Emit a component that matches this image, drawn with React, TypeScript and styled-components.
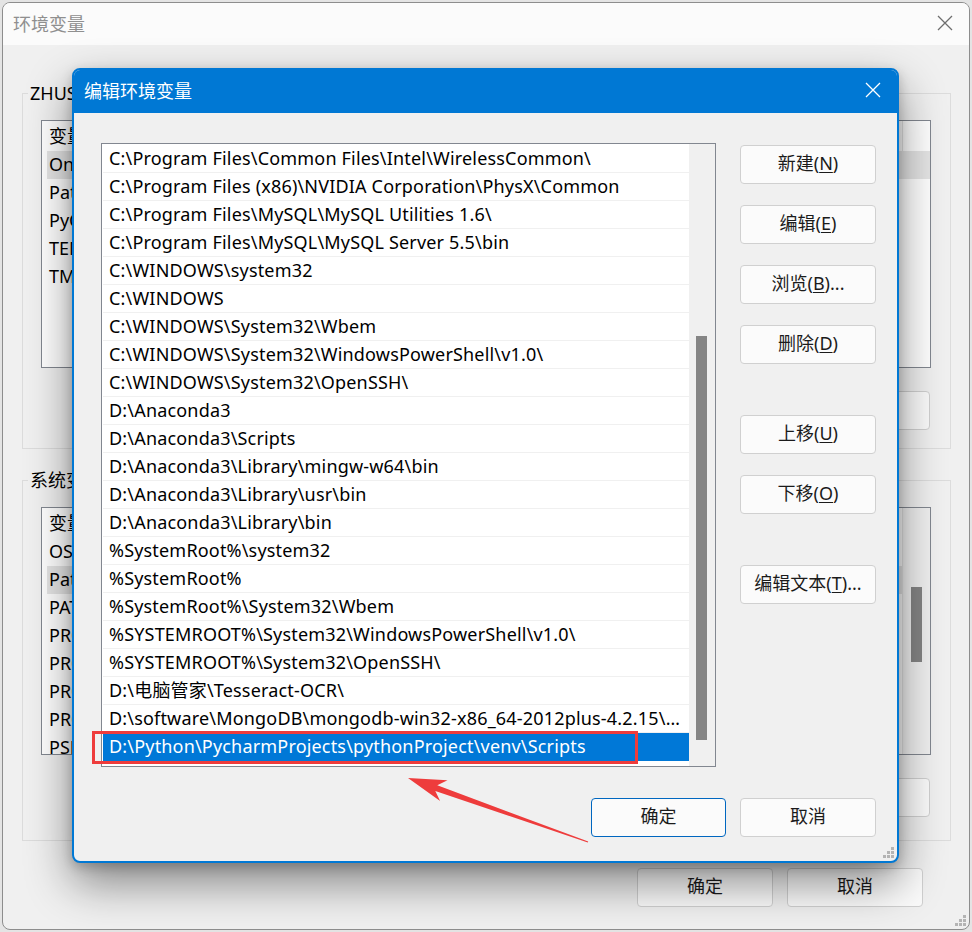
import React from "react";
import styled, { createGlobalStyle } from "styled-components";

const GlobalStyle = createGlobalStyle`
  html, body { margin: 0; padding: 0; }
  body {
    background: #e4e4e4;
    font-family: "Noto Sans", "Noto Sans CJK SC", sans-serif;
  }
`;

// 편집 대화상자 목록 (backslash는 이스케이프)
const paths = [
  "C:\\Program Files\\Common Files\\Intel\\WirelessCommon\\",
  "C:\\Program Files (x86)\\NVIDIA Corporation\\PhysX\\Common",
  "C:\\Program Files\\MySQL\\MySQL Utilities 1.6\\",
  "C:\\Program Files\\MySQL\\MySQL Server 5.5\\bin",
  "C:\\WINDOWS\\system32",
  "C:\\WINDOWS",
  "C:\\WINDOWS\\System32\\Wbem",
  "C:\\WINDOWS\\System32\\WindowsPowerShell\\v1.0\\",
  "C:\\WINDOWS\\System32\\OpenSSH\\",
  "D:\\Anaconda3",
  "D:\\Anaconda3\\Scripts",
  "D:\\Anaconda3\\Library\\mingw-w64\\bin",
  "D:\\Anaconda3\\Library\\usr\\bin",
  "D:\\Anaconda3\\Library\\bin",
  "%SystemRoot%\\system32",
  "%SystemRoot%",
  "%SystemRoot%\\System32\\Wbem",
  "%SYSTEMROOT%\\System32\\WindowsPowerShell\\v1.0\\",
  "%SYSTEMROOT%\\System32\\OpenSSH\\",
  "D:\\电脑管家\\Tesseract-OCR\\",
  "D:\\software\\MongoDB\\mongodb-win32-x86_64-2012plus-4.2.15\\bin",
  "D:\\Python\\PycharmProjects\\pythonProject\\venv\\Scripts",
];
const selectedIndex = 21;

// 뒤쪽 창은 대화상자에 가려 이름 앞부분만 보임
const userVars = [
  { name: "OneDrive", active: true },
  { name: "Path" },
  { name: "PyCharm" },
  { name: "TEMP" },
  { name: "TMP" },
];

const systemVars = [
  { name: "OS" },
  { name: "Path", active: true },
  { name: "PATHEXT" },
  { name: "PROCESSOR_ARCHITECTURE" },
  { name: "PROCESSOR_IDENTIFIER" },
  { name: "PROCESSOR_LEVEL" },
  { name: "PROCESSOR_REVISION" },
  { name: "PSModulePath" },
];

function CloseIcon({ color }: { color: string }) {
  return (
    <svg width="16" height="16" viewBox="0 0 16 16">
      <path d="M1 1 L15 15 M15 1 L1 15" stroke={color} strokeWidth="1.3" fill="none" />
    </svg>
  );
}

function Grip() {
  return (
    <svg width="11" height="11" viewBox="0 0 11 11">
      {[
        [8, 0],
        [4, 4],
        [8, 4],
        [0, 8],
        [4, 8],
        [8, 8],
      ].map(([x, y], i) => (
        <rect key={i} x={x} y={y} width="3" height="3" fill="#b4b4b4" />
      ))}
    </svg>
  );
}

function Key({ label, k, tail = "" }: { label: string; k?: string; tail?: string }) {
  return (
    <>
      {label}
      {k && (
        <>
          (<u>{k}</u>)
        </>
      )}
      {tail}
    </>
  );
}

function VarTable({ rows, scroll }: { rows: { name: string; active?: boolean }[]; scroll?: boolean }) {
  return (
    <VarList>
      <VarColumn>
        <HeaderRow>
          <Cell $w={250}>变量</Cell>
          <Cell $w={606} $divider />
        </HeaderRow>
        {rows.map((r) => (
          <VarRow key={r.name} $active={!!r.active}>
            <Cell $w={250}>{r.name}</Cell>
          </VarRow>
        ))}
      </VarColumn>
      {scroll && (
        <BackScroll>
          <BackThumb />
        </BackScroll>
      )}
    </VarList>
  );
}

export default function App() {
  return (
    <>
      <GlobalStyle />
      <Desktop>
        <BackWindow>
          <BackTitleBar>
            <span>环境变量</span>
            <CloseIcon color="#6e6e6e" />
          </BackTitleBar>
          <BackBody>
            <Group $pb={18}>
              <GroupTitle>ZHUSHUO 的用户变量(U)</GroupTitle>
              <VarTable rows={userVars} />
              <ButtonRow>
                <Button $w={136}>
                  <Key label="新建" k="N" tail="..." />
                </Button>
                <Button $w={136}>
                  <Key label="编辑" k="E" tail="..." />
                </Button>
                <Button $w={136}>
                  <Key label="删除" k="D" />
                </Button>
              </ButtonRow>
            </Group>
            <Group $pb={23} $mt={31}>
              <GroupTitle>系统变量(S)</GroupTitle>
              <VarTable rows={systemVars} scroll />
              <ButtonRow>
                <Button $w={136}>
                  <Key label="新建" k="W" tail="..." />
                </Button>
                <Button $w={136}>
                  <Key label="编辑" k="I" tail="..." />
                </Button>
                <Button $w={136}>
                  <Key label="删除" k="L" />
                </Button>
              </ButtonRow>
            </Group>
            <Footer $mt={27} $mr={28}>
              <Button $w={136}>确定</Button>
              <Button $w={136}>取消</Button>
            </Footer>
          </BackBody>
          <GripCorner>
            <Grip />
          </GripCorner>
        </BackWindow>

        <Dialog>
          <DialogTitle>
            <span>编辑环境变量</span>
            <CloseIcon color="#ffffff" />
          </DialogTitle>
          <DialogBody>
            <PathList>
              <Rows>
                {paths.map((p, i) => (
                  <PathRow key={p} $selected={i === selectedIndex}>
                    {p}
                  </PathRow>
                ))}
              </Rows>
              <ScrollTrack>
                <Thumb $top={192} $height={404} />
              </ScrollTrack>
            </PathList>
            <SideButtons>
              <Button $w={136}>
                <Key label="新建" k="N" />
              </Button>
              <Button $w={136}>
                <Key label="编辑" k="E" />
              </Button>
              <Button $w={136}>
                <Key label="浏览" k="B" tail="..." />
              </Button>
              <Button $w={136}>
                <Key label="删除" k="D" />
              </Button>
              <Button $w={136} $spaced>
                <Key label="上移" k="U" />
              </Button>
              <Button $w={136}>
                <Key label="下移" k="O" />
              </Button>
              <Button $w={136} $spaced>
                <Key label="编辑文本" k="T" tail="..." />
              </Button>
            </SideButtons>
          </DialogBody>
          <Footer $mt={31} $mr={21}>
            <Button $w={135} $primary>
              确定
            </Button>
            <Button $w={136}>取消</Button>
          </Footer>
          <GripCorner>
            <Grip />
          </GripCorner>
        </Dialog>

        <Highlight />
        <Arrow viewBox="0 0 195 80" width="195" height="80">
          <polygon
            points="8,8 47.5,10.3 37.3,15.3 188.2,71.5 187.8,72.5 35.3,20.9 40.1,31.1"
            fill="#ee3c3c"
          />
        </Arrow>
      </Desktop>
    </>
  );
}

const Desktop = styled.div`
  position: relative;
  width: 972px;
  height: 932px;
  overflow: hidden;
  background: #e4e4e4;
  font-size: 18px;
  color: #000;
`;

/* ---------- 뒤쪽 창 ---------- */

const BackWindow = styled.div`
  position: absolute;
  left: 2px;
  top: 2px;
  width: 968px;
  height: 928px;
  box-sizing: border-box;
  border: 1px solid #8d8d8d;
  border-radius: 8px;
  background: #f0f0f0;
  overflow: hidden;
  display: flex;
  flex-direction: column;
`;

const BackTitleBar = styled.div`
  height: 42px;
  flex-shrink: 0;
  box-sizing: border-box;
  display: flex;
  align-items: center;
  justify-content: space-between;
  padding: 0 16px 3px 10px;
  background: #fbfbfb;
  color: #8f8f8f;
`;

const BackBody = styled.div`
  display: flex;
  flex-direction: column;
  padding: 48px 18px 0 19px;
`;

const Group = styled.div<{ $pb: number; $mt?: number }>`
  border: 1px solid #dcdcdc;
  padding: 0 19px ${({ $pb }) => $pb}px 18px;
  margin-top: ${({ $mt }) => $mt || 0}px;
`;

const GroupTitle = styled.div`
  width: fit-content;
  height: 24px;
  line-height: 22px;
  margin: -12px 0 0 -13px;
  padding: 0 2px;
  background: #f0f0f0;
  white-space: nowrap;
`;

const VarList = styled.div`
  margin-top: 14px;
  height: 248px;
  box-sizing: border-box;
  border: 1px solid #828790;
  background: #ffffff;
  display: flex;
  overflow: hidden;
`;

const VarColumn = styled.div`
  flex: 1;
  padding-left: 5px;
  overflow: hidden;
`;

const HeaderRow = styled.div`
  display: flex;
  height: 30px;
  line-height: 30px;
`;

const VarRow = styled.div<{ $active: boolean }>`
  display: flex;
  height: 28px;
  line-height: 27px;
  background: ${({ $active }) => ($active ? "#e5e5e5" : "transparent")};
`;

const Cell = styled.div<{ $w: number; $divider?: boolean }>`
  width: ${({ $w }) => $w}px;
  flex-shrink: 0;
  box-sizing: border-box;
  padding-left: 2px;
  white-space: nowrap;
  overflow: hidden;
  border-right: ${({ $divider }) => ($divider ? "1px solid #e5e5e5" : "none")};
`;

const BackScroll = styled.div`
  width: 27px;
  flex-shrink: 0;
  background: #f0f0f0;
  border-left: 1px solid #e3e3e3;
`;

const BackThumb = styled.div`
  margin: 79px 0 0 8px;
  width: 11px;
  height: 75px;
  background: #858585;
`;

const ButtonRow = styled.div`
  display: flex;
  justify-content: flex-end;
  gap: 14px;
  margin: 23px 1px 0 0;
`;

const Footer = styled.div<{ $mt: number; $mr: number }>`
  display: flex;
  justify-content: flex-end;
  gap: 14px;
  margin-top: ${({ $mt }) => $mt}px;
  margin-right: ${({ $mr }) => $mr}px;
`;

const Button = styled.button<{ $w: number; $primary?: boolean; $spaced?: boolean }>`
  width: ${({ $w }) => $w}px;
  height: 39px;
  flex-shrink: 0;
  box-sizing: border-box;
  padding: 0 0 3px;
  margin-top: ${({ $spaced }) => ($spaced ? 30 : 0)}px;
  border: 1px solid ${({ $primary }) => ($primary ? "#0067c0" : "#d0d0d0")};
  border-radius: 4px;
  background: #fbfbfb;
  color: #1b1b1b;
  font-family: inherit;
  font-size: 18px;
  line-height: 1;
  white-space: nowrap;

  u {
    text-underline-offset: 2px;
  }
`;

const GripCorner = styled.div`
  position: absolute;
  right: 3px;
  bottom: 3px;
  line-height: 0;
`;

/* ---------- 편집 대화상자 ---------- */

const Dialog = styled.div`
  position: absolute;
  left: 72px;
  top: 68px;
  width: 827px;
  height: 795px;
  box-sizing: border-box;
  border: 2px solid #0078d4;
  border-radius: 8px;
  background: #f0f0f0;
  overflow: hidden;
  box-shadow: 0 20px 46px rgba(0, 0, 0, 0.45), 0 4px 12px rgba(0, 0, 0, 0.2);
`;

const DialogTitle = styled.div`
  height: 43px;
  box-sizing: border-box;
  display: flex;
  align-items: center;
  justify-content: space-between;
  padding: 0 16px 3px 10px;
  background: #0078d4;
  color: #ffffff;
`;

const DialogBody = styled.div`
  display: grid;
  grid-template-columns: 615px 136px;
  column-gap: 24px;
  padding: 30px 0 0 27px;
`;

const PathList = styled.div`
  height: 624px;
  box-sizing: border-box;
  border: 1px solid #828790;
  background: #ffffff;
  display: flex;
  overflow: hidden;
`;

const Rows = styled.div`
  width: 587px;
  padding: 1px 0 0 1px;
  box-sizing: border-box;
`;

const PathRow = styled.div<{ $selected: boolean }>`
  height: 28px;
  line-height: 26px;
  box-sizing: border-box;
  padding: 0 4px 0 6px;
  border-bottom: 1px solid ${({ $selected }) => ($selected ? "#0078d7" : "#f0f0f0")};
  background: ${({ $selected }) => ($selected ? "#0078d7" : "#ffffff")};
  color: ${({ $selected }) => ($selected ? "#ffffff" : "#000000")};
  letter-spacing: 0.18px;
  white-space: nowrap;
  overflow: hidden;
  text-overflow: ellipsis;
`;

const ScrollTrack = styled.div`
  width: 26px;
  background: #f0f0f0;
`;

const Thumb = styled.div<{ $top: number; $height: number }>`
  margin: ${({ $top }) => $top}px 0 0 7px;
  width: 11px;
  height: ${({ $height }) => $height}px;
  background: #858585;
`;

const SideButtons = styled.div`
  display: flex;
  flex-direction: column;
  gap: 21px;
  padding-top: 2px;
`;

/* ---------- 주석 표시 ---------- */

const Highlight = styled.div`
  position: absolute;
  left: 92px;
  top: 731px;
  width: 546px;
  height: 33px;
  box-sizing: border-box;
  border: 3px solid #ee3c3c;
`;

const Arrow = styled.svg`
  position: absolute;
  left: 400px;
  top: 770px;
`;
